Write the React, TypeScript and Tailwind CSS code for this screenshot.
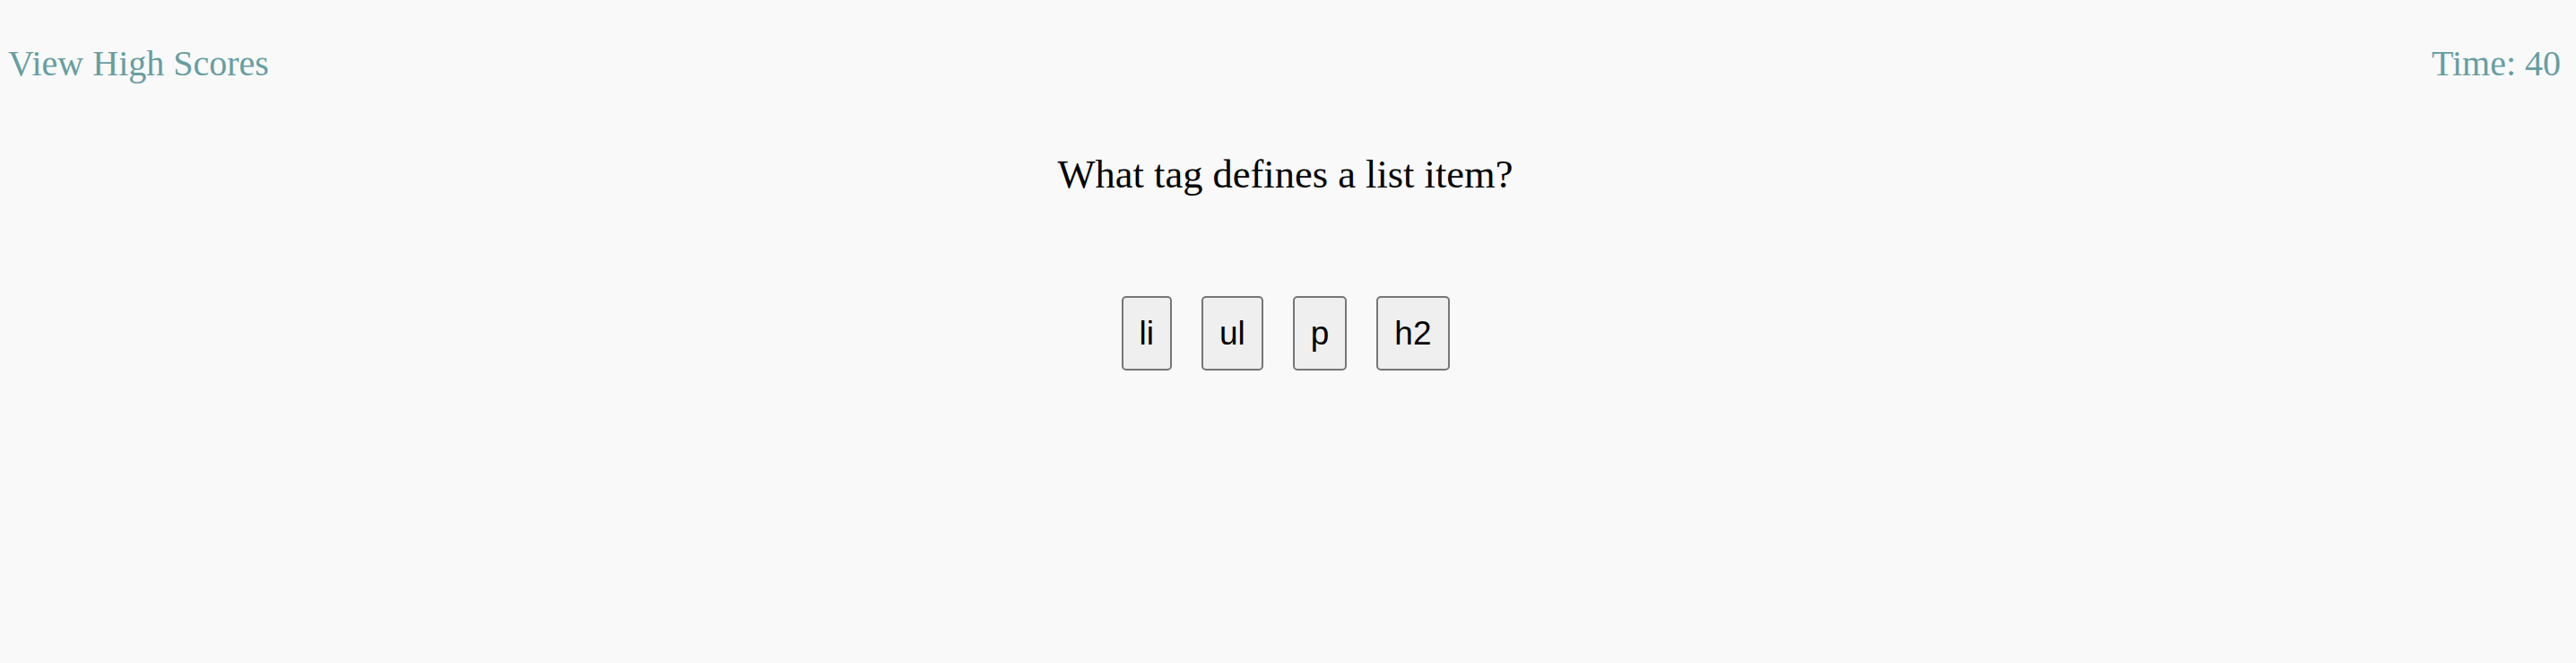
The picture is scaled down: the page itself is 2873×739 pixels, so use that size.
export default function App() {
  const choices = ['li', 'ul', 'p', 'h2'];

  return (
    <div className="min-h-screen w-full bg-[#f9f9f9]" style={{ fontFamily: '"Liberation Serif", "Times New Roman", serif' }}>
      {/* Top bar */}
      <header className="flex items-start justify-between pl-[9px] pr-[17px] pt-[48px] text-[40px] leading-[46px] text-[#679ea1]">
        <a href="#" className="no-underline">View High Scores</a>
        <span>Time: 40</span>
      </header>

      {/* Question */}
      <main className="flex flex-col items-center pr-[6px]">
        <h2 className="mt-[74px] text-[44.5px] leading-[52px] font-normal text-black">
          What tag defines a list item?
        </h2>

        <div className="mt-[110px] flex gap-[33px]">
          {choices.map((c) => (
            <button
              key={c}
              className="h-[83px] rounded-[5px] border-2 border-[#767676] bg-[#efefef] px-[18px] text-[37px] leading-[42px] text-black"
              style={{ fontFamily: '"Liberation Sans", Arial, sans-serif' }}
            >
              {c}
            </button>
          ))}
        </div>
      </main>
    </div>
  );
}
